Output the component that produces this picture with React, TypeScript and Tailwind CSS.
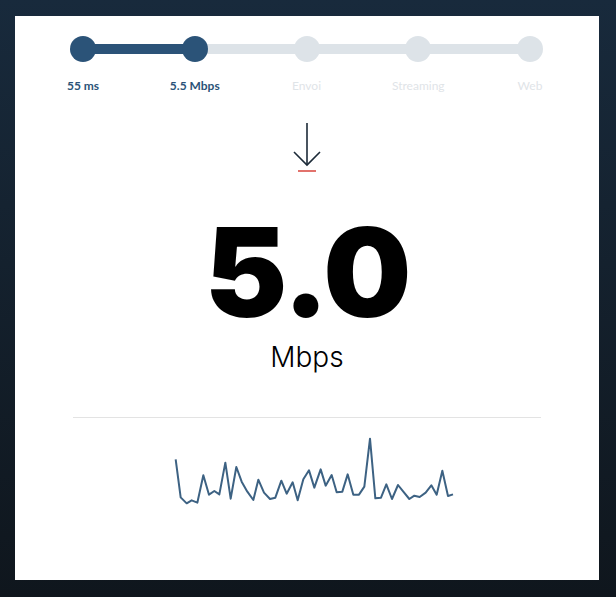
const STEPS = [
  { label: '55 ms', done: true },
  { label: '5.5 Mbps', done: true },
  { label: 'Envoi', done: false },
  { label: 'Streaming', done: false },
  { label: 'Web', done: false },
]

// sample points, in the chart's own viewBox units
const SAMPLES = [
  [47, 118], [62, 232], [80, 250], [95, 241], [112, 248], [130, 166], [147, 224], [163, 213],
  [178, 223], [196, 128], [212, 236], [229, 141], [245, 185], [262, 215], [280, 240], [295, 179],
  [312, 218], [330, 237], [346, 233], [364, 182], [380, 221], [398, 187], [413, 241], [430, 178],
  [447, 151], [463, 203], [482, 148], [497, 197], [515, 165], [530, 217], [547, 215], [563, 163],
  [580, 224], [597, 224], [613, 200], [630, 56], [646, 235], [663, 233], [679, 193], [696, 237],
  [714, 195], [730, 215], [748, 237], [763, 227], [779, 231], [797, 218], [814, 196], [830, 224],
  [847, 152], [864, 228], [879, 223],
]

function Progress() {
  return (
    <div className="relative ml-[55px] w-[473px]">
      <div className="absolute left-[13px] top-[8px] h-[10px] w-[447px] bg-[#dde3e8]" />
      <div className="absolute left-[13px] top-[8px] h-[10px] w-[112px] bg-[#2b5378]" />
      <div className="relative flex justify-between">
        {STEPS.map((s) => (
          <div key={s.label} className="flex w-[26px] flex-col items-center">
            <div className={`h-[26px] w-[26px] rounded-full ${s.done ? 'bg-[#2b5378]' : 'bg-[#dde3e8]'}`} />
            <span
              className={`mt-[16px] whitespace-nowrap text-[12px] leading-[15px] ${
                s.done ? 'font-bold text-[#2b5378]' : 'text-[#dfe4e8]'
              }`}
            >
              {s.label}
            </span>
          </div>
        ))}
      </div>
    </div>
  )
}

export default function App() {
  const points = SAMPLES.map(([x, y]) => `${x},${y}`).join(' ')
  return (
    <div className="h-[597px] w-full overflow-hidden bg-gradient-to-b from-[#182a3c] to-[#0f161d] pt-[16px] font-['Lato','Liberation_Sans',sans-serif]">
      <div className="ml-[15px] h-[564px] w-[584px] bg-white pt-[20px]">
        <Progress />

        <div className="mt-[30px] flex flex-col items-center">
          <svg width="28" height="44" viewBox="0 0 28 44" fill="none" stroke="#1c2a38" strokeWidth="1.6">
            <path d="M14 0 V42" />
            <path d="M1 29 L14 42 L27 29" />
          </svg>
          <div className="mt-[3px] h-[2px] w-[18px] bg-[#e2726c]" />
        </div>

        <div className="mt-[38px] text-center font-['Inter',sans-serif] text-[124px] font-black leading-none tracking-[-2px] text-black">
          5.0
        </div>
        <div className="mt-[9px] text-center font-['Inter',sans-serif] text-[28px] font-light leading-none text-black">
          Mbps
        </div>

        <div className="mx-[58px] mt-[46px] h-px bg-[#e3e3e3]" />

        <svg className="ml-[145px] mt-[2px]" width="310" height="90" viewBox="0 0 930 270" fill="none">
          <polyline points={points} stroke="#3d6283" strokeWidth="6" strokeLinejoin="round" />
        </svg>
      </div>
    </div>
  )
}
